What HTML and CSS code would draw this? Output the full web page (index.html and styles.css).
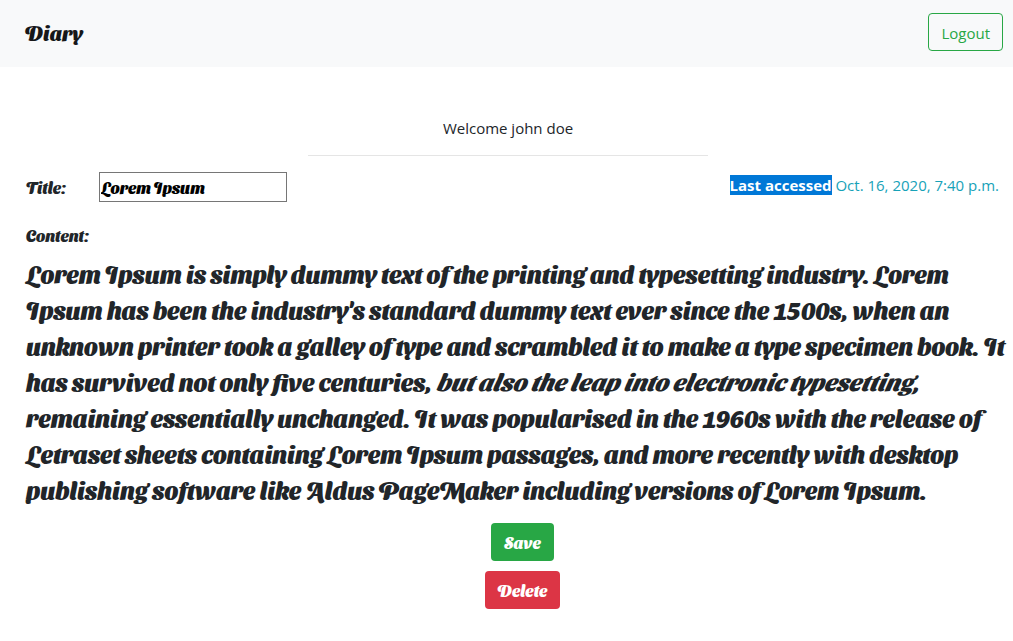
FILE: index.html
```html
<!DOCTYPE html>
<html lang="en">
<head>
<meta charset="utf-8">
<meta name="viewport" content="width=device-width, initial-scale=1">
<title>Diary</title>
<link rel="stylesheet" href="styles.css">
</head>
<body>
<header class="navbar">
  <a class="brand" href="#">Diary</a>
  <button class="btn btn-outline" type="button">Logout</button>
</header>
<main>
  <div class="intro">
    <p class="welcome">Welcome john doe</p>
    <hr class="divider">
  </div>
  <form class="entry">
    <div class="entry-head">
      <label class="field-label" for="title">Title:</label>
      <input class="title-input" id="title" type="text" value="Lorem Ipsum">
      <p class="accessed"><strong class="selected">Last accessed</strong> Oct. 16, 2020, 7:40 p.m.</p>
    </div>
    <h2 class="content-label">Content:</h2>
    <p class="content">Lorem Ipsum is simply dummy text of the printing and typesetting industry. Lorem Ipsum has been the industry's standard dummy text ever since the 1500s, when an unknown printer took a galley of type and scrambled it to make a type specimen book. It has survived not only five centuries, <em>but also the leap into electronic typesetting,</em> remaining essentially unchanged. It was popularised in the 1960s with the release of Letraset sheets containing Lorem Ipsum passages, and more recently with desktop publishing software like Aldus PageMaker including versions of Lorem Ipsum.</p>
    <div class="actions">
      <button class="btn btn-save" type="button">Save</button>
      <button class="btn btn-delete" type="button">Delete</button>
    </div>
  </form>
</main>
</body>
</html>
```
FILE: styles.css
```css
* { box-sizing: border-box; }
body {
  margin: 0;
  background: #fff;
  color: #212529;
  font: 16px/24px "Segoe UI", "Open Sans", "Noto Sans", sans-serif;
}
.brand, .field-label, .title-input, .content-label, .content, .btn-save, .btn-delete {
  font-family: "Sansita Swashed", "Liberation Serif", serif;
  font-weight: 900;
}
.navbar {
  display: flex;
  align-items: center;
  justify-content: space-between;
  padding: 13px 10px 16px 25px;
  background: #f8f9fa;
}
.brand {
  padding-top: 2px;
  color: #161719;
  font-size: 20px;
  text-decoration: none;
}
.btn {
  height: 38px;
  padding: 1px 12px 0;
  border: 1px solid transparent;
  border-radius: 4px;
  font-size: 16px;
  color: #fff;
}
.btn-outline {
  padding-top: 2px;
  border-color: #28a745;
  background: transparent;
  color: #28a745;
  font: 15px/24px "Segoe UI", "Open Sans", "Noto Sans", sans-serif;
}
.btn-save { background: #28a745; }
.btn-delete { background: #dc3545; }
.intro { padding: 49px 0 0 3px; }
.welcome {
  margin: 0;
  font-size: 15px;
  text-align: center;
}
.divider {
  width: 400px;
  margin: 15px auto 16px;
  border: 0;
  border-top: 1px solid #e5e5e5;
}
.entry { padding: 0 0 32px 26px; }
.entry-head {
  display: flex;
  align-items: center;
  padding-right: 14px;
}
.field-label {
  width: 73px;
  padding-top: 2px;
  font-size: 16px;
}
.title-input {
  width: 188px;
  height: 30px;
  padding: 1px;
  border: 1px solid #767676;
  background: #fff;
  color: #000;
  font-size: 16px;
}
.accessed {
  margin: 0 0 4px auto;
  color: #17a2b8;
  font-size: 15px;
}
.selected {
  background: #0078d7;
  color: #fff;
}
.content-label {
  margin: 22px 0 7px;
  font-size: 16px;
  line-height: 24px;
}
.content {
  margin: 0;
  font-size: 24px;
  line-height: 36px;
}
.actions {
  display: flex;
  flex-direction: column;
  align-items: center;
  gap: 10px;
  margin-top: 16px;
  padding-left: 6px;
}
```
